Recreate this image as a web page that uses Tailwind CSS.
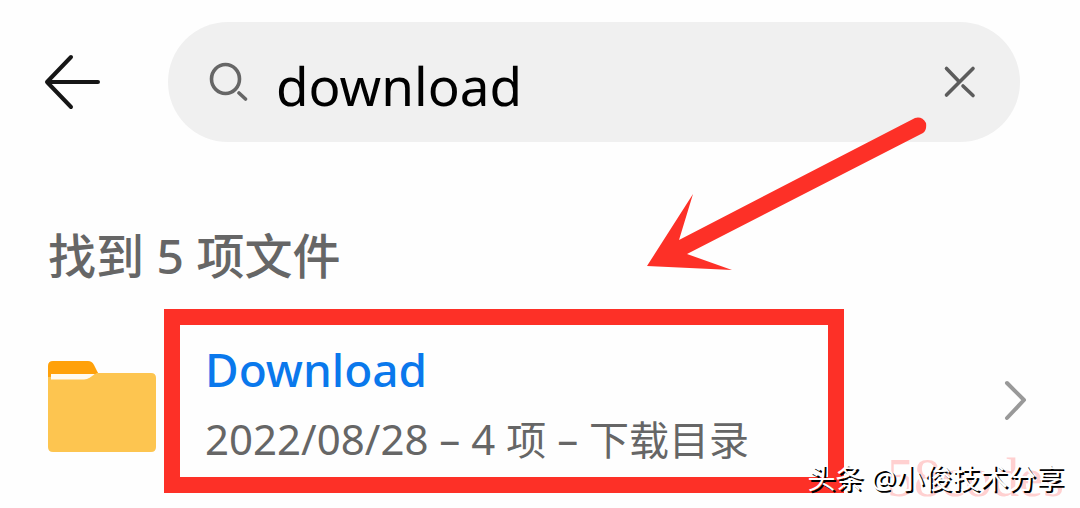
<!DOCTYPE html>
<html lang="zh-CN">
<head>
<meta charset="utf-8">
<meta name="viewport" content="width=device-width, initial-scale=1">
<title>download</title>
<script src="https://cdn.jsdelivr.net/npm/@tailwindcss/browser@4"></script>
</head>
<body class="relative min-h-screen overflow-x-hidden bg-[#fefefe] font-['Noto_Sans','Noto_Sans_CJK_SC',sans-serif] text-[#666]">
  <header class="flex items-center pt-[22px] pr-[60px] pl-11">
    <button type="button" aria-label="返回" class="mr-16 shrink-0">
      <svg class="h-[60px] w-[60px]" viewBox="0 0 60 60" fill="none" stroke="#161616" stroke-width="4" stroke-linecap="round" stroke-linejoin="round"><path d="M27 5 3 30 27 55M3 30H54"/></svg>
    </button>
    <form role="search" class="flex h-[120px] min-w-0 flex-1 items-center rounded-full bg-[#f0f0f0] pr-10 pl-10" onsubmit="return false">
      <svg class="h-10 w-10 shrink-0" viewBox="0 0 40 40" fill="none" stroke="#666" stroke-width="3.6" stroke-linecap="round"><ellipse cx="17.500" cy="17" rx="14" ry="14.500"/><path d="m31 31 6.500 6"/></svg>
      <input type="text" aria-label="搜索" value="download" class="ml-7 min-w-0 flex-1 bg-transparent pt-2 text-[53px] leading-[72px] text-black outline-none">
      <button type="button" aria-label="清除" class="shrink-0">
        <svg class="h-10 w-10" viewBox="0 0 40 40" fill="none" stroke="#5c5c5c" stroke-width="3.6" stroke-linecap="round"><path d="M6.500 6.500 19 19.500M33 6.500 6.500 33M23 24 33 33.500"/></svg>
      </button>
    </form>
  </header>
  <main>
    <h1 class="mt-[78px] px-12 text-[48px] leading-[72px] font-medium">找到 5 项文件</h1>
    <a href="#" class="mt-[17px] flex items-center pr-12 pl-12">
      <svg class="mt-3 h-[92px] w-[108px] shrink-0" viewBox="0 0 108 92"><path d="M0 20V5Q0 0 5 0H40Q44 0 46 4L52 16V24H0Z" fill="#ffa10a"/><path d="M0 30V12H103Q108 12 108 17V86Q108 91 103 91H5Q0 91 0 86Z" fill="#fdc550"/><path d="M0 16V11H50L46 14Z" fill="#ffa10a"/><path d="M3 13H47L42 16.500Q39 18.500 36 18.500H3Z" fill="#fffaf0"/></svg>
      <span class="ml-2 flex min-w-0 flex-1 flex-col border-16 border-[#fd3027] pt-[10px] pb-px pl-[25px]">
        <span class="text-[46px] leading-[68px] font-medium text-[#0a78ec]">Download</span>
        <span class="text-[42px] leading-[72px] whitespace-nowrap">2022/08/28 – 4 <span class="text-[40px]">项</span> – <span class="text-[40px]">下载目录</span></span>
      </span>
      <svg class="ml-40 h-11 w-7 shrink-0" viewBox="0 0 28 44" fill="none" stroke="#999" stroke-width="4" stroke-linecap="round" stroke-linejoin="round"><path d="m3 4 17 17L3 39"/></svg>
    </a>
  </main>
  <svg class="pointer-events-none absolute top-[117px] right-[153px] h-[153px] w-[280px]" viewBox="0 0 280 153" fill="#fd3027"><path d="M0 149 46 77 32 123 268 1Q275-1 279 6 280 13 276 16L40 137 85 153Z"/></svg>
  <p class="absolute right-4 bottom-0.5 font-['Liberation_Serif',serif] text-[54px] leading-[56px] text-[#ffd0d0]">58codes</p>
  <p class="absolute right-4 bottom-2.5 text-[28px] leading-10 text-white [text-shadow:2px_2px_0_#000]">头条 @小俊技术分享</p>
</body>
</html>
